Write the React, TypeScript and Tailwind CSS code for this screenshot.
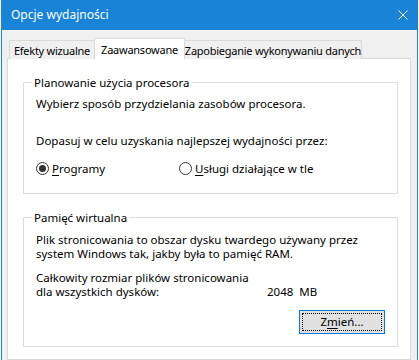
import React from "react";

const font = { fontFamily: '"Segoe UI", "Noto Sans", sans-serif' };

const Radio: React.FC<{ checked?: boolean }> = ({ checked }) => (
  <span className="w-[13px] h-[13px] rounded-full border border-[#333] bg-white flex items-center justify-center shrink-0">
    {checked && <span className="w-[7px] h-[7px] rounded-full bg-[#333]" />}
  </span>
);

export default function App() {
  return (
    <div
      className="w-[419px] h-[360px] overflow-hidden bg-white px-px text-[11.5px] text-black"
      style={font}
    >
      <div className="h-full flex flex-col bg-[#f0f0f0] border-x border-[#1883d7]">
        {/* Title bar */}
        <div className="h-[30px] shrink-0 bg-[#1883d7] flex items-center justify-between -mx-px">
          <span className="pl-[10px] text-white text-[12px] leading-none">Opcje wydajności</span>
          <span className="w-[30px] flex justify-center">
            <svg width="10" height="10" viewBox="0 0 10 10" fill="none">
              <path d="M0.5 0.5 L9.5 9.5 M9.5 0.5 L0.5 9.5" stroke="white" strokeWidth="1" />
            </svg>
          </span>
        </div>

        {/* Body */}
        <div className="flex-1 flex flex-col pl-[5px] pr-[6px] pt-[8px]">
          {/* Tabs */}
          <div className="flex items-end pl-[2px] h-[21px] -mb-px relative z-10 whitespace-nowrap text-[11px] tracking-[-0.25px]">
            <div className="w-[86px] h-[19px] border border-b-0 border-[#d9d9d9] bg-[#f0f0f0] flex items-center justify-center leading-none">
              Efekty wizualne
            </div>
            <div className="w-[91px] h-[21px] border border-b-0 border-[#d9d9d9] bg-white flex items-center justify-center leading-none -ml-px">
              Zaawansowane
            </div>
            <div className="w-[178px] h-[19px] border border-b-0 border-[#d9d9d9] bg-[#f0f0f0] flex items-center justify-center leading-none -ml-px">
              Zapobieganie wykonywaniu danych
            </div>
          </div>

          {/* Panel */}
          <div className="flex-1 bg-white border border-[#d9d9d9] pl-[15px] pr-[12px] flex flex-col">
            <fieldset className="mt-[16px] border border-[#dcdcdc] pl-[12px] pb-[17px]">
              <legend className="ml-[-4px] px-[2px] leading-[15px]">Planowanie użycia procesora</legend>
              <div className="pt-[6px] leading-[15px]">Wybierz sposób przydzielania zasobów procesora.</div>
              <div className="mt-[22px] leading-[15px]">Dopasuj w celu uzyskania najlepszej wydajności przez:</div>
              <div className="mt-[13px] flex items-center leading-[15px] h-[15px]">
                <div className="w-[143px] flex items-center gap-[3px]">
                  <Radio checked />
                  <span>
                    <span className="underline underline-offset-2">P</span>rogramy
                  </span>
                </div>
                <div className="flex items-center gap-[3px]">
                  <Radio />
                  <span>
                    <span className="underline underline-offset-2">U</span>sługi działające w tle
                  </span>
                </div>
              </div>
            </fieldset>

            <fieldset className="mt-[16px] border border-[#dcdcdc] pl-[12px] pr-[12px] pb-[12px]">
              <legend className="ml-[-4px] px-[2px] leading-[15px]">Pamięć wirtualna</legend>
              <div className="pt-[8px] leading-[14px]">
                Plik stronicowania to obszar dysku twardego używany przez
                <br />
                system Windows tak, jakby była to pamięć RAM.
              </div>
              <div className="mt-[10px] leading-[14px]">Całkowity rozmiar plików stronicowania</div>
              <div className="flex leading-[14px]">
                <span className="w-[231px]">dla wszystkich dysków:</span>
                <span>2048</span>
                <span className="ml-[6px]">MB</span>
              </div>
              <div className="mt-[11px] flex justify-end">
                <button className="w-[86px] h-[24px] border border-[#0078d7] bg-[#e1e1e1] p-[2px]">
                  <span className="h-full flex items-center justify-center border border-dotted border-black leading-none">
                    Z<span className="underline underline-offset-2">m</span>ień...
                  </span>
                </button>
              </div>
            </fieldset>
          </div>
        </div>
      </div>
    </div>
  );
}
